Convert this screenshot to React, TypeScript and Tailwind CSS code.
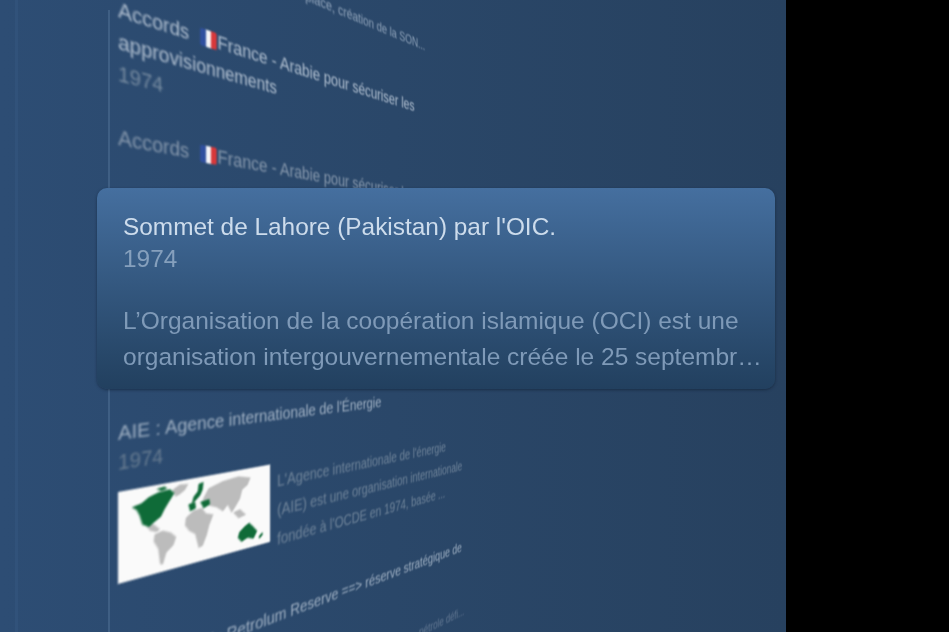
function FranceFlag() {
  return (
    <span className="inline-flex w-[20px] h-[19px] ml-[13px] mr-[1px] align-[-2px] overflow-hidden rounded-[2px]">
      <span className="flex-1 bg-[#2f4f9f]" />
      <span className="flex-1 bg-[#f4f5f8]" />
      <span className="flex-1 bg-[#d8383a]" />
    </span>
  );
}

function WorldMap() {
  return (
    <svg viewBox="0 0 181 92" className="w-[181px] h-[92px] shrink-0 bg-[#fafafa]">
      <g fill="#bcbcbc" transform="translate(0 3)">
        <path d="M58 5 L66 1 L76 2 L72 8 L65 12 L61 13 Z" />
        <path d="M29 37 L37 37 L44 44 L40 46 L33 43 Z" />
        <path d="M38 48 L47 46 L56 50 L62 56 L59 64 L51 70 L47 82 L44 80 L42 64 L37 55 Z" />
        <path d="M73 38 L82 32 L92 31 L97 38 L106 41 L101 52 L98 62 L93 73 L88 74 L84 58 L77 53 L72 46 Z" />
        <path d="M93 22 L100 11 L118 6 L138 4 L154 8 L150 16 L143 20 L140 30 L134 38 L129 44 L124 34 L118 40 L110 34 L100 30 Z" />
        <path d="M131 44 L140 42 L148 50 L138 52 Z" />
      </g>
      <g fill="#0f6b38" transform="translate(0 3)">
        <path d="M14 15 L24 13 L32 8 L42 5 L55 4 L60 9 L54 17 L49 24 L45 31 L38 35 L32 39 L25 35 L22 25 L19 19 Z" />
        <path d="M40 1 L49 0 L52 3 L45 4 Z" />
        <path d="M88 4 L94 3 L93 11 L90 17 L84 22 L80 24 L82 17 L87 12 Z" />
        <path d="M76 24 L84 23 L85 30 L78 32 Z" />
        <path d="M90 24 L101 23 L102 29 L94 32 Z" />
        <path d="M139 68 L146 63 L152 60 L157 65 L163 72 L158 80 L150 77 L142 80 L137 74 Z" />
        <path d="M165 79 L170 75 L171 78 L166 82 Z" />
      </g>
    </svg>
  );
}

function TimelineList() {
  return (
    <div className="relative w-[640px] ml-[118px] mt-[-100px] origin-[0_420px] blur-[1.1px] text-[21.3px] leading-[32px] text-[#b0bfd0] [transform:matrix3d(1,0,0,0.00105,0,1,0,0,0,0,1,0,0,0,0,1)]">
      <p className="pl-[165px] text-[18px] leading-[32px] text-[#8ea2b9] whitespace-nowrap">
        Mise en place, création de la SON...
      </p>

      <div className="mt-[62px]">
        <p className="whitespace-nowrap">
          Accords
          <FranceFlag />
          France - Arabie pour sécuriser les
        </p>
        <p>approvisionnements</p>
        <p className="text-[#74899f]">1974</p>
      </div>

      <div className="mt-[32px] h-[295px] text-[#8496ab]">
        <p className="whitespace-nowrap">
          Accords
          <FranceFlag />
          France - Arabie pour sécuriser les approvisionnements
        </p>
      </div>

      <p className="text-[20.7px] leading-[32px] font-medium text-[#9eafc2] whitespace-nowrap">
        AIE : Agence internationale de l'Énergie
      </p>
      <p className="leading-[28px] text-[#64798f]">1974</p>

      <div className="flex gap-[10px] mt-[15px]">
        <WorldMap />
        <p className="text-[19.5px] leading-[35px] mt-[4px] text-[#6d8298] whitespace-nowrap">
          L'Agence internationale de l'énergie
          <br />
          (AIE) est une organisation internationale
          <br />
          fondée à l'OCDE en 1974, basée ...
        </p>
      </div>

      <p className="mt-[58px] pl-[36px] text-[20.5px] leading-[32px] text-[#9eafc2] whitespace-nowrap">
        Strategic Petrolum Reserve ==&gt; réserve stratégique de
      </p>
      <p className="mt-[70px] pl-[440px] text-[18px] text-[#5f7590] whitespace-nowrap">
        pétrole défi...
      </p>
    </div>
  );
}

function DetailCard() {
  return (
    <div className="absolute left-[97px] top-[188px] w-[678px] h-[201px] rounded-[10px] px-[26px] pt-[23px] bg-gradient-to-b from-[#456f9f] to-[#22405f] shadow-[0_1px_3px_rgba(15,30,50,0.6)]">
      <p className="text-[24.4px] leading-[32px] text-[#cddcec] whitespace-nowrap">Sommet de Lahore (Pakistan) par l'OIC.</p>
      <p className="text-[24.4px] leading-[32px] text-[#86a0bd]">1974</p>
      <p className="mt-[28px] text-[24.5px] leading-[36px] text-[#7f9ab8] whitespace-nowrap">
        L’Organisation de la coopération islamique (OCI) est une
        <br />
        organisation intergouvernementale créée le 25 septembr…
      </p>
    </div>
  );
}

export default function App() {
  return (
    <div className="flex w-[949px] h-[632px] bg-black font-['Liberation_Sans',sans-serif]">
      <div className="relative w-[786px] h-full overflow-hidden bg-gradient-to-r from-[#2d4d74] via-[#2a4769] to-[#27415f]">
        <div className="absolute left-[15px] top-0 bottom-0 w-[3px] bg-[#31527a]" />
        <div className="absolute left-[108px] top-[10px] bottom-0 w-[2px] bg-[#3f5f84]" />
        <TimelineList />
        <DetailCard />
      </div>
    </div>
  );
}
